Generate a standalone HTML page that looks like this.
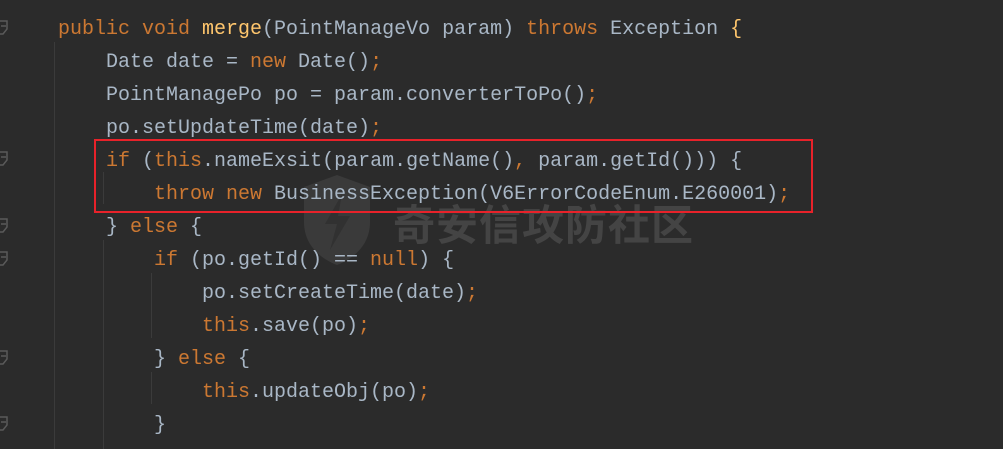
<!DOCTYPE html>
<html><head><meta charset="utf-8"><style>
body{margin:0;width:1003px;height:449px;background:#2b2b2b;overflow:hidden;position:relative;font-family:"Liberation Mono",monospace;}
.l{position:absolute;left:0;height:33px;line-height:33px;font-size:20px;color:#a9b7c6;white-space:pre;}
.k{color:#cc7832}.m{color:#ffc66d}
.g{position:absolute;width:1px;background:#3b3b3b}
.f{position:absolute;left:0}
</style></head><body>
<div class="g" style="left:54px;top:42px;height:407px"></div>
<div class="g" style="left:103px;top:172px;height:32px"></div>
<div class="g" style="left:103px;top:240px;height:209px"></div>
<div class="g" style="left:151px;top:273px;height:65px"></div>
<div class="g" style="left:151px;top:372px;height:32px"></div>
<svg class="f" width="10" height="449" style="top:0">
<g fill="none" stroke="#5a5a5a" stroke-width="1.5">
<path d="M0 21H7V29L3 34H0M1 26H6"/>
<path d="M0 152H7V160L3 165H0M1 157H6"/>
<path d="M0 219H7V227L3 232H0M1 224H6"/>
<path d="M0 252H7V260L3 265H0M1 257H6"/>
<path d="M0 351H7V359L3 364H0M1 356H6"/>
<path d="M0 417H7V425L3 430H0M1 422H6"/>
</g></svg>
<svg style="position:absolute;left:300px;top:172px" width="75" height="95">
<path d="M37 3L70 15V50C70 72 55 86 37 93C19 86 4 72 4 50V15Z" fill="#777" opacity="0.2"/>
<path d="M42 22L25 52H37L30 78L50 44H38Z" fill="#2b2b2b" opacity="0.6"/>
</svg>
<div style="position:absolute;left:393px;top:198px;font-family:'Noto Sans CJK SC',sans-serif;font-weight:bold;font-size:42px;letter-spacing:1px;color:#6a6a6a;opacity:0.4;line-height:50px">奇安信攻防社区</div>
<div class="l" style="top:13px;left:58px"><span class="k">public void </span><span class="m">merge</span>(PointManageVo param) <span class="k">throws </span>Exception <span class="m">{</span></div>
<div class="l" style="top:46px;left:106px">Date date = <span class="k">new </span>Date()<span class="k">;</span></div>
<div class="l" style="top:79px;left:106px">PointManagePo po = param.converterToPo()<span class="k">;</span></div>
<div class="l" style="top:112px;left:106px">po.setUpdateTime(date)<span class="k">;</span></div>
<div class="l" style="top:145px;left:106px"><span class="k">if </span>(<span class="k">this</span>.nameExsit(param.getName()<span class="k">, </span>param.getId())) {</div>
<div class="l" style="top:178px;left:154px"><span class="k">throw new </span>BusinessException(V6ErrorCodeEnum.E260001)<span class="k">;</span></div>
<div class="l" style="top:211px;left:106px">} <span class="k">else </span>{</div>
<div class="l" style="top:244px;left:154px"><span class="k">if </span>(po.getId() == <span class="k">null</span>) {</div>
<div class="l" style="top:277px;left:202px">po.setCreateTime(date)<span class="k">;</span></div>
<div class="l" style="top:310px;left:202px"><span class="k">this</span>.save(po)<span class="k">;</span></div>
<div class="l" style="top:343px;left:154px">} <span class="k">else </span>{</div>
<div class="l" style="top:376px;left:202px"><span class="k">this</span>.updateObj(po)<span class="k">;</span></div>
<div class="l" style="top:409px;left:154px">}</div>
<div style="position:absolute;left:94px;top:139px;width:715px;height:70px;border:2.5px solid #e8222a"></div>
</body></html>
